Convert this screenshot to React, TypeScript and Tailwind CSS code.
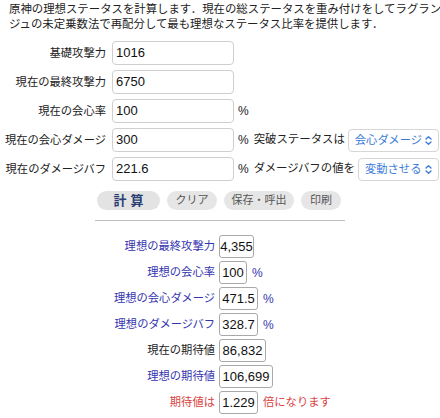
import React from "react";

const jp = "font-['Liberation_Sans','Noto_Sans_CJK_JP',sans-serif]";

function TopRow({ label, value, unit, extra }: { label: string; value: string; unit?: boolean; extra?: React.ReactNode }) {
  return (
    <div className="flex items-center h-[24px]">
      <div className="w-[106px] text-right text-[11.3px] text-[#222] whitespace-nowrap">{label}</div>
      <div className="ml-[6px] w-[122px] h-[24px] border border-[#cfcfcf] rounded-[4px] px-[3px] flex items-center text-[13px] text-[#111]">{value}</div>
      {unit && <div className="ml-[4px] text-[12px] text-[#222]">%</div>}
      {extra}
    </div>
  );
}

function Select({ text, w }: { text: string; w: string }) {
  return (
    <div className={`ml-[3px] h-[23px] border border-[#d6d6d6] rounded-[4px] flex items-center justify-between pl-[6px] pr-[5px] text-[11.3px] text-[#3d7bd9] whitespace-nowrap ${w}`}>
      <span>{text}</span>
      <svg width="9" height="11" viewBox="0 0 9 11" fill="none" stroke="#3d7bd9" strokeWidth="1.4" strokeLinecap="round" strokeLinejoin="round">
        <path d="M2 4 L4.5 1.8 L7 4" />
        <path d="M2 7 L4.5 9.2 L7 7" />
      </svg>
    </div>
  );
}

function ResRow({ label, value, w, color, unit }: { label: string; value: string; w: string; color: string; unit?: React.ReactNode }) {
  return (
    <div className="flex items-center h-[23px]">
      <div className={`w-[215px] text-right text-[11.3px] whitespace-nowrap ${color}`}>{label}</div>
      <div className={`ml-[4px] h-[23px] border border-[#a9a9a9] rounded-[3px] flex items-center justify-center text-[13px] text-[#111] ${w}`}>{value}</div>
      {unit}
    </div>
  );
}

export default function App() {
  return (
    <div className={`w-[440px] h-[418px] bg-white overflow-hidden ${jp}`}>
      <div className="px-[9px] pt-[2px] text-[11.4px] leading-[15px] text-[#222] whitespace-nowrap">
        原神の理想ステータスを計算します．現在の総ステータスを重み付けをしてラグラン
        <br />
        ジュの未定乗数法で再配分して最も理想なステータス比率を提供します．
      </div>
      <div className="mt-[9px] flex flex-col gap-[5px]">
        <TopRow label="基礎攻撃力" value="1016" />
        <TopRow label="現在の最終攻撃力" value="6750" />
        <TopRow label="現在の会心率" value="100" unit />
        <TopRow
          label="現在の会心ダメージ"
          value="300"
          unit
          extra={
            <>
              <div className="ml-[5px] text-[11.4px] text-[#222] whitespace-nowrap">突破ステータスは</div>
              <Select text="会心ダメージ" w="w-[91px]" />
            </>
          }
        />
        <TopRow
          label="現在のダメージバフ"
          value="221.6"
          unit
          extra={
            <>
              <div className="ml-[5px] text-[11.4px] text-[#222] whitespace-nowrap">ダメージバフの値を</div>
              <Select text="変動させる" w="w-[81px]" />
            </>
          }
        />
      </div>
      <div className="mt-[10px] flex items-center pl-[97px] gap-[7px]">
        <div className="w-[63px] h-[19px] rounded-full bg-[#e3e3e3] flex items-center justify-center text-[13px] font-bold text-[#2b3f73] tracking-[4px] pl-[4px]">計算</div>
        <div className="w-[50px] h-[19px] rounded-full bg-[#e6e6e6] flex items-center justify-center text-[11px] text-[#555]">クリア</div>
        <div className="w-[70px] h-[19px] rounded-full bg-[#e6e6e6] flex items-center justify-center text-[11px] text-[#555]">保存・呼出</div>
        <div className="w-[40px] h-[19px] rounded-full bg-[#e6e6e6] flex items-center justify-center text-[11px] text-[#555]">印刷</div>
      </div>
      <div className="mt-[10px] ml-[95px] w-[250px] h-[1px] bg-[#bdbdbd]" />
      <div className="mt-[14px] flex flex-col gap-[3px]">
        <ResRow label="理想の最終攻撃力" value="4,355" w="w-[35px]" color="text-[#3535b0]" />
        <ResRow label="理想の会心率" value="100" w="w-[28px]" color="text-[#3535b0]" unit={<div className="ml-[5px] text-[12px] text-[#3535b0]">%</div>} />
        <ResRow label="理想の会心ダメージ" value="471.5" w="w-[39px]" color="text-[#3535b0]" unit={<div className="ml-[5px] text-[12px] text-[#3535b0]">%</div>} />
        <ResRow label="理想のダメージバフ" value="328.7" w="w-[39px]" color="text-[#3535b0]" unit={<div className="ml-[5px] text-[12px] text-[#3535b0]">%</div>} />
        <ResRow label="現在の期待値" value="86,832" w="w-[47px]" color="text-[#222]" />
        <ResRow label="理想の期待値" value="106,699" w="w-[54px]" color="text-[#3535b0]" />
        <ResRow label="期待値は" value="1.229" w="w-[39px]" color="text-[#d9433f]" unit={<div className="ml-[5px] text-[11.3px] text-[#d9433f]">倍になります</div>} />
      </div>
    </div>
  );
}
